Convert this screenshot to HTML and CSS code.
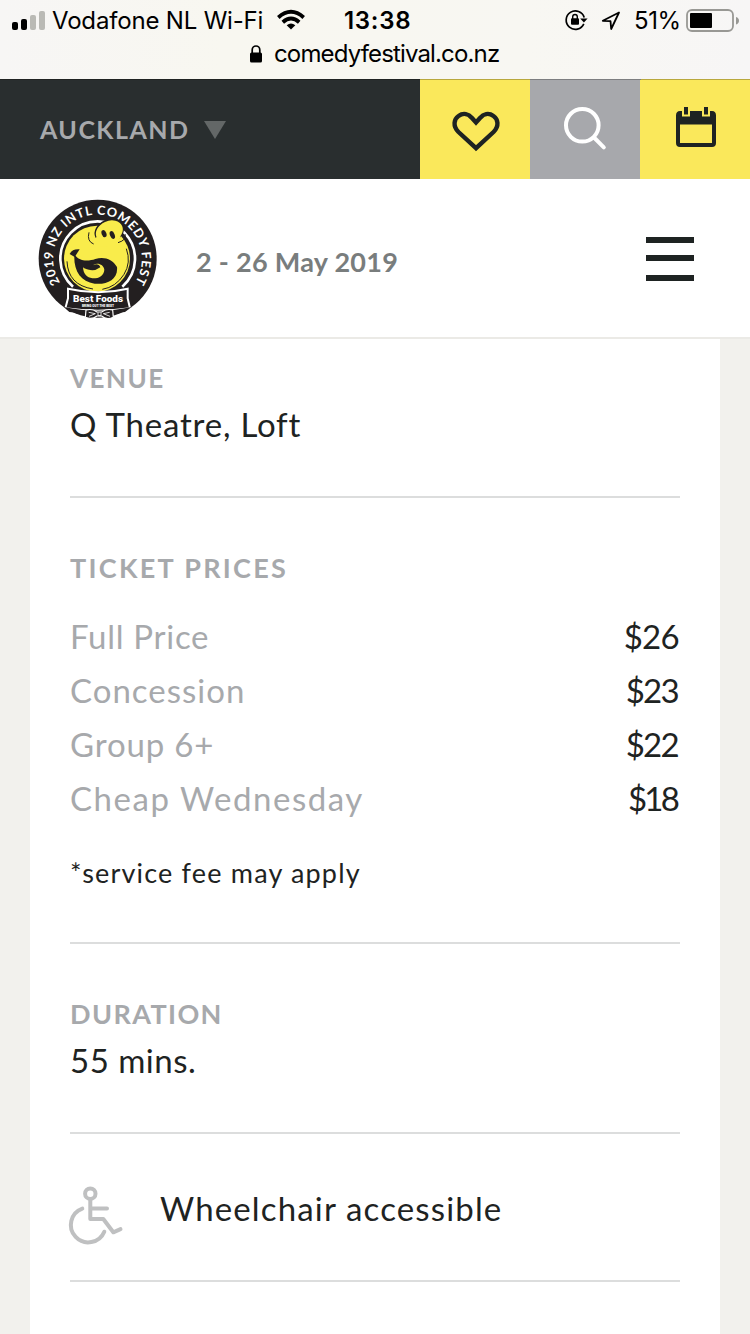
FILE: index.html
```html
<!DOCTYPE html>
<html lang="en">
<head>
<meta charset="utf-8">
<title>NZ International Comedy Festival</title>
<link rel="stylesheet" href="styles.css">
</head>
<body>
<div class="screen">
  <header class="status">
    <div class="status-row">
      <svg class="signal" width="34" height="22" viewBox="0 0 34 22"><rect x="0" y="12" width="6" height="8" rx="2"/><rect x="9" y="9" width="6" height="11" rx="2"/><g fill="#babab5"><rect x="18" y="5" width="6" height="15" rx="2"/><rect x="27" y="1" width="6" height="19" rx="2"/></g></svg>
      <span class="carrier">Vodafone NL Wi-Fi</span>
      <svg class="wifi" width="28" height="20" viewBox="0 0 28 20" fill="none" stroke="#000" stroke-width="3.8"><path d="M1.3 7.5Q14-3.8 26.7 7.5"/><path d="M5.8 12.2Q14 5 22.2 12.2"/><path d="M9.7 15.2Q14 11.8 18.3 15.2L14 19.6Z" fill="#000" stroke="none"/></svg>
      <span class="clock">13:38</span>
      <svg class="rotation" width="23" height="22" viewBox="0 0 23 22"><path d="M18.8 14.8A9.2 9.2 0 1 1 19.2 8.5" fill="none" stroke="#000" stroke-width="1.7"/><path d="M15.2 9.6H22.6L18.9 13.6Z"/><rect x="6" y="9.3" width="8" height="6.5" rx="1"/><path d="M7.7 10V7.8a2.3 2.3 0 0 1 4.6 0V10" fill="none" stroke="#000" stroke-width="1.4"/></svg>
      <svg class="location" width="20" height="20" viewBox="0 0 20 20" fill="none" stroke="#000" stroke-width="1.8" stroke-linejoin="round"><path d="M18 1.5L1.8 9.8L9.5 10.2L10.2 18Z"/></svg>
      <span class="percent">51%</span>
      <svg class="battery" width="54" height="24" viewBox="0 0 54 24"><rect x="1" y="1" width="46" height="21" rx="5" fill="none" stroke="#989894" stroke-width="1.8"/><rect x="4" y="4" width="22" height="15" rx="1"/><path d="M50 8Q53 9 53 11.8T50 15.5Z" fill="#989894"/></svg>
    </div>
    <div class="address">
      <svg width="12" height="18" viewBox="0 0 12 18"><rect x="0" y="7.5" width="12" height="10" rx="1.5"/><path d="M2.2 8.5V5a3.8 4 0 0 1 7.6 0V8.5" fill="none" stroke="#000" stroke-width="1.7"/></svg>
      <span class="url">comedyfestival.co.nz</span>
    </div>
  </header>

  <nav class="toolbar">
    <div class="city"><span class="city-name">AUCKLAND</span><svg width="22" height="18" viewBox="0 0 22 18"><path d="M0 0H22L11 18Z" fill="#636767"/></svg></div>
    <div class="tool yellow"><svg width="110" height="100" viewBox="0 1 110 100"><path d="M56 69.200L38.500 53C32.500 47 34 40 38.500 37C43.500 33.400 48.500 35 52 39L56 43.500L60 39C63.500 35 68.500 33.400 73.500 37C78 40 79.500 47 73.500 53Z" fill="none" stroke="#1e2322" stroke-width="4.400"/></svg></div>
    <div class="tool gray"><svg width="110" height="100" viewBox="0 1 110 100" fill="none" stroke="#fff" stroke-width="4"><circle cx="52.300" cy="46.300" r="16.300"/><path d="M64.500 59L73.800 68.300" stroke-linecap="round"/></svg></div>
    <div class="tool yellow"><svg width="110" height="100" viewBox="0 1 110 100"><path d="M36 36.500Q36 32 40 32H42V37.500H50V32H62V37.500H70V32H72Q76 32 76 36.500V64Q76 68 72 68H40Q36 68 36 64ZM40 45.500V64H72V45.500Z" fill="#1e2322" fill-rule="evenodd"/><path d="M44 28H48V35.500H44ZM64 28H68V35.500H64Z" fill="#1e2322"/></svg></div>
  </nav>

  <div class="masthead">
    <svg class="logo" width="140" height="140" viewBox="0 0 420 420">
      <circle cx="203" cy="206" r="177" fill="#231f20"/>
      <path d="M129 290A112 112 0 1 1 277 290" fill="none" stroke="#fff" stroke-width="8"/>
      <path id="ring" d="M90 278A133 133 0 1 1 312 282" fill="none"/>
      <text class="ring-text"><textPath href="#ring" textLength="566" lengthAdjust="spacing">2019 NZ INTL COMEDY FEST</textPath></text>
      <circle cx="201" cy="206" r="99" fill="#f9ec4b"/>
      <ellipse cx="238" cy="123" rx="46" ry="35" fill="#231f20" transform="rotate(-24 238 123)"/>
      <ellipse cx="238" cy="125" rx="42" ry="32" fill="#f9ec4b" transform="rotate(-24 238 125)"/>
      <path d="M188 151C190 173 230 178 258 158L274 140L246 134L204 138Z" fill="#f9ec4b"/>
      <path d="M177 127Q170 154 191 162M285 132Q291 150 264 158" fill="none" stroke="#231f20" stroke-width="3"/>
      <ellipse cx="222" cy="131" rx="7" ry="11" fill="#231f20" transform="rotate(-22 222 131)"/>
      <ellipse cx="247" cy="135" rx="7" ry="12" fill="#231f20" transform="rotate(-22 247 135)"/>
      <path d="M111 214Q114 285 189 297M289 176Q304 218 282 253Q258 291 217 298" fill="none" stroke="#231f20" stroke-width="3"/>
      <path d="M133 191C144 214 173 215 196 207C222 199 247 207 261 231C265 268 231 285 194 281C151 275 130 242 133 191Z" fill="#231f20"/>
      <path d="M119 192C125 181 134 177 149 178L134 201Z" fill="#231f20"/>
      <path d="M159 232C171 241 184 242 191 224C205 217 221 225 223 239C222 257 206 266 187 265C171 263 160 252 159 232Z" fill="#f9ec4b"/>
      <path d="M173 237Q190 247 211 232Q207 219 191 224Z" fill="#231f20"/>
      <path d="M114 296Q205 317 293 296V325L300 355Q205 370 106 355L114 325Z" fill="#231f20" stroke="#fff" stroke-width="6"/>
      <path d="M101 351Q205 373 305 351L285 366Q205 378 118 366Z" fill="#231f20"/>
      <text class="brand" x="204" y="337" textLength="150" lengthAdjust="spacingAndGlyphs">Best Foods</text>
      <text class="motto" x="204" y="350" textLength="96" lengthAdjust="spacingAndGlyphs">BRING OUT THE BEST</text>
      <path d="M168 360Q187 355 201 366H215Q230 355 248 360L250 382Q229 391 215 378H201Q186 390 166 382Z" fill="#231f20" stroke="#fff" stroke-width="3.500"/>
      <path d="M176 367L196 371L177 379M239 367L220 371L240 379M204 367V377H213V367" fill="none" stroke="#fff" stroke-width="2.500"/>
    </svg>
    <span class="dates">2 - 26 May 2019</span>
    <div class="menu"><i></i><i></i><i></i></div>
  </div>

  <main class="page">
    <article class="card">
      <section class="block first">
        <h2 class="label venue">VENUE</h2>
        <p class="value theatre">Q Theatre, Loft</p>
      </section>
      <section class="block prices">
        <h2 class="label tickets">TICKET PRICES</h2>
        <dl class="list">
          <div class="price"><dt class="full">Full Price</dt><dd>$26</dd></div>
          <div class="price"><dt class="concession">Concession</dt><dd class="tight">$23</dd></div>
          <div class="price"><dt class="group">Group 6+</dt><dd class="tight">$22</dd></div>
          <div class="price"><dt class="cheap">Cheap Wednesday</dt><dd class="tighter">$18</dd></div>
        </dl>
        <p class="note">*service fee may apply</p>
      </section>
      <section class="block">
        <h2 class="label duration">DURATION</h2>
        <p class="value mins">55 mins.</p>
      </section>
      <section class="block access">
        <svg width="54" height="60" viewBox="0 0 54 60" fill="none" stroke="#bfc0c1" stroke-width="4" stroke-linecap="round" stroke-linejoin="round"><circle cx="20.300" cy="8.700" r="5.200"/><path d="M20.300 14V34H33.300L43.300 47.300L50.500 44.200M20.300 23.400H37M12.300 23.600A17.400 17.400 0 1 0 34.300 46.700"/></svg>
        <p class="value wheelchair">Wheelchair accessible</p>
      </section>
    </article>
  </main>
</div>
</body>
</html>
```
FILE: styles.css
```css
* { box-sizing: border-box; }
body, h2, p, dl, dd { margin: 0; }
body { font-family: Lato, "Open Sans", sans-serif; color: #1e2322; background: #fff; }
svg { display: block; flex: none; overflow: visible; }
span, p, h2, dt, dd { white-space: nowrap; }
.screen { width: 750px; height: 1334px; overflow: hidden; display: flex; flex-direction: column; }

.status { height: 80px; flex: none; border: solid; border-width: 0 0 1px; border-image: linear-gradient(90deg, #202322 56%, #b9a83d 56% 70.67%, #7d7e80 70.67% 85.33%, #b9a83d 85.33%) 1; background: linear-gradient(90deg, #f7f6f5, #f8f7f0 30%, #f8f7f2 70%, #f7f6f6); font-family: Inter, "Liberation Sans", sans-serif; font-size: 24px; color: #000; }
.status-row { display: flex; height: 40px; padding-left: 12px; align-items: center; line-height: 40px; }
.status-row span { padding-top: 2px; }
.signal { width: 34px; margin: 2px 6px 0 0; }
.carrier { width: 211px; margin-right: 14px; letter-spacing: -.18px; }
.clock { width: 67px; margin-left: 39px; font-weight: 600; letter-spacing: .7px; }
.rotation { margin-left: 154px; }
.location { margin: 1px 0 0 13px; }
.percent { width: 46px; margin-left: 13px; letter-spacing: -.4px; }
.battery { margin: 1px 0 0 6px; }
.address { display: flex; height: 28px; padding-left: 250px; align-items: center; gap: 12px; line-height: 28px; }
.url { letter-spacing: -.85px; }

.toolbar { display: flex; height: 99px; flex: none; background: #292e2f; }
.city { width: 420px; display: flex; align-items: center; padding: 0 0 0 40px; color: #a7a9ac; }
.city-name { width: 164px; font-size: 25px; font-weight: 700; letter-spacing: 1.45px; line-height: 32px; padding-bottom: 2px; }
.tool { width: 110px; overflow: hidden; }
.yellow { background: #fae85b; }
.gray { background: #a7a8ac; }

.masthead { height: 160px; flex: none; display: flex; align-items: flex-start; padding: 11px 56px 0 30px; border-bottom: 2px solid #ebeae6; }
.ring-text { font: 700 38px Lato, sans-serif; fill: #fff; }
.brand, .motto { fill: #fff; text-anchor: middle; font-family: Roboto, sans-serif; font-weight: 900; }
.brand { font-size: 29px; }
.motto { font-size: 9px; }
.dates { margin: 55px 0 0 26px; color: #797d7d; font-size: 27px; line-height: 34px; font-weight: 700; letter-spacing: .28px; }
.menu { width: 48px; margin: 47px 0 0 auto; display: grid; grid-template-rows: 6px 6px 6px; row-gap: 12px; }
.menu i { background: #1e2322; }
.menu i:last-child { transform: translateY(2px); }

.page { flex: 1; padding: 0 30px; background: #f2f1ed; }
.card { height: 995px; padding: 0 40px; background: #fff; }
.block { padding: 54px 0 46px; border-bottom: 2px solid #dcdddd; }
.first { padding-top: 23px; }
.prices { padding-bottom: 54px; }
.label { height: 34px; font-size: 27px; line-height: 32px; color: #a7a9ac; font-weight: 700; }
.venue { font-size: 26px; letter-spacing: 1.5px; line-height: 33px; }
.tickets { letter-spacing: 2.3px; }
.duration { letter-spacing: 1.4px; }
.value, .price { font-size: 33px; line-height: 54px; }
.value { height: 54px; padding-top: 1px; letter-spacing: .8px; }
.mins { letter-spacing: .5px; }
.wheelchair { letter-spacing: 1.15px; }
.list { padding-top: 23px; margin-bottom: -1px; }
.price { display: flex; justify-content: space-between; }
.price dt { color: #a7a9ac; letter-spacing: .7px; }
.price .concession { letter-spacing: 1px; }
.price .group { letter-spacing: .85px; }
.price .cheap { letter-spacing: 1.55px; }
.price dd { margin-right: 1px; letter-spacing: -.7px; }
.price .tight { margin-right: 2px; letter-spacing: -1.7px; }
.price .tighter { margin-right: 3px; letter-spacing: -2.8px; }
.note { margin-top: 32px; font-size: 27px; line-height: 34px; height: 32px; letter-spacing: 1.18px; }
.access { display: flex; padding-top: 46px; }
.access svg { margin-top: 5px; height: 60px; margin-bottom: -11px; }
.access .value { margin-left: 36px; }
```
